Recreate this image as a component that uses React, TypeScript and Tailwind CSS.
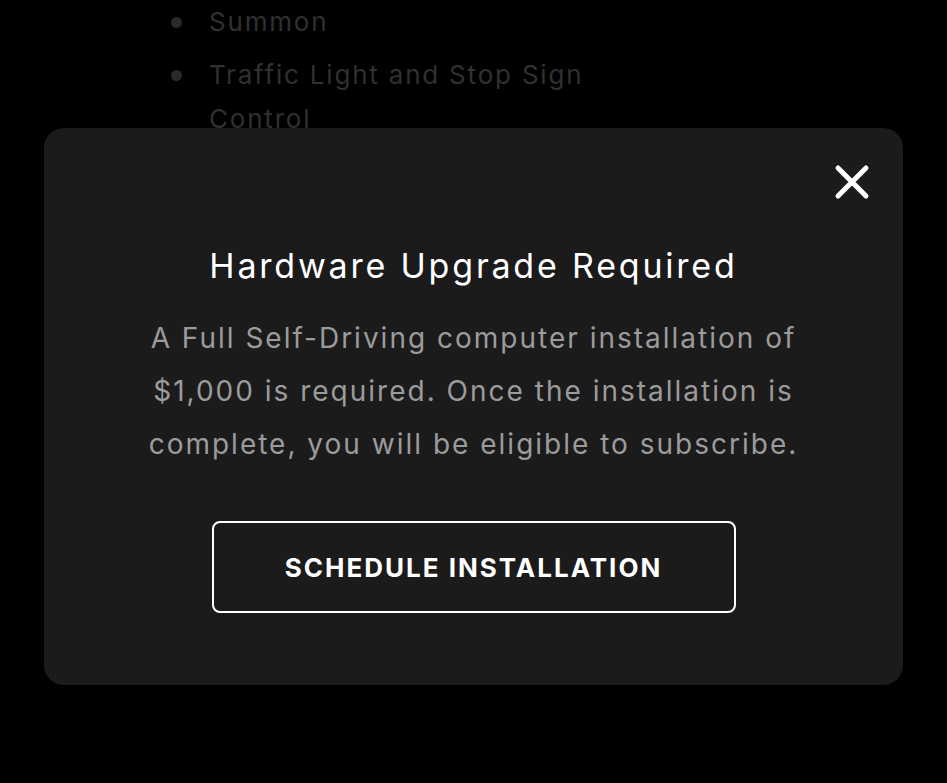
import React from 'react';

const features = ['Summon', 'Traffic Light and Stop Sign Control'];

function CloseIcon() {
  return (
    <svg width="38" height="38" viewBox="0 0 38 38" fill="none">
      <path d="M5 5L33 33M33 5L5 33" stroke="white" strokeWidth="5" strokeLinecap="round" />
    </svg>
  );
}

export default function App() {
  return (
    <div className="relative h-[783px] w-full overflow-hidden bg-black font-['Inter','Open_Sans',sans-serif]">
      {/* page content behind the dialog */}
      <ul className="ml-[171px] flex w-[440px] flex-col gap-[9px] text-[26px] leading-[44px] tracking-[1.8px] text-[#303030]">
        {features.map((f) => (
          <li key={f} className="flex gap-[27px]">
            <span className="mt-[17px] h-[11px] w-[11px] shrink-0 rounded-full bg-[#2a2a2a]" />
            <span>{f}</span>
          </li>
        ))}
      </ul>

      {/* dialog */}
      <div className="absolute left-[44px] top-[128px] flex h-[557px] w-[859px] flex-col items-center rounded-[20px] bg-[#1b1b1b] pt-[118px]">
        <button className="absolute right-[32px] top-[35px]" aria-label="Close">
          <CloseIcon />
        </button>
        <h2 className="text-[34px] leading-[40px] tracking-[2.8px] text-white">Hardware Upgrade Required</h2>
        <p className="mt-[26px] text-center text-[28px] leading-[53px] tracking-[2px] text-[#9b9b9b]">
          A Full Self-Driving computer installation of
          <br />
          $1,000 is required. Once the installation is
          <br />
          complete, you will be eligible to subscribe.
        </p>
        <button className="mt-[50px] flex h-[92px] w-[524px] items-center justify-center rounded-[8px] border-2 border-white text-[26px] font-bold tracking-[2px] text-white">
          SCHEDULE INSTALLATION
        </button>
      </div>
    </div>
  );
}
